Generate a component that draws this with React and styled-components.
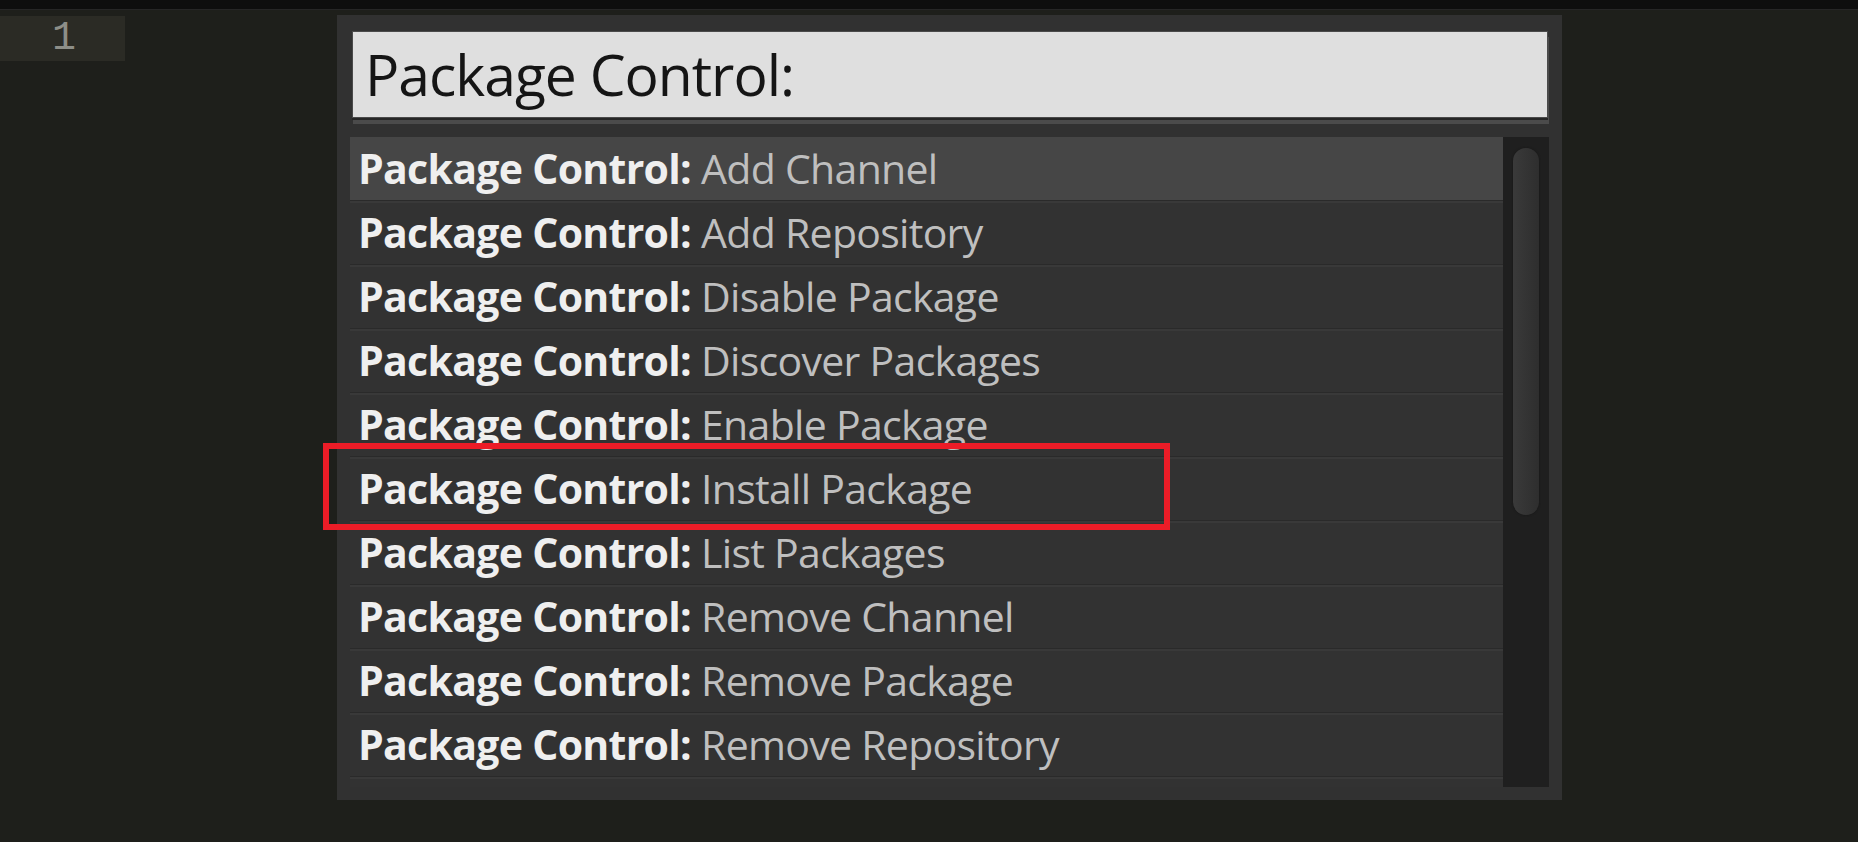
import React from "react";
import styled, { createGlobalStyle } from "styled-components";

const GlobalStyle = createGlobalStyle`
  html, body {
    margin: 0;
    padding: 0;
    background: #1e1f1b;
    overflow: hidden;
  }
`;

const Window = styled.div`
  position: relative;
  width: 1858px;
  height: 842px;
  background: #1e1f1b;
  font-family: "Open Sans", "Noto Sans", sans-serif;
  overflow: hidden;
`;

const TopBar = styled.div`
  height: 9px;
  background: #0e0e0e;
  border-bottom: 1px solid #262626;
`;

const Editor = styled.div`
  display: flex;
  padding-top: 6px;
`;

const Gutter = styled.div`
  width: 125px;
  display: flex;
  flex-direction: column;
`;

const LineNumber = styled.div`
  height: 45px;
  background: ${(p) => (p.$active ? "#2b2b25" : "transparent")};
  color: #8d8e88;
  font-family: "Liberation Mono", "DejaVu Sans Mono", monospace;
  font-size: 40px;
  line-height: 46px;
  padding-left: 52px;
`;

const Panel = styled.div`
  position: absolute;
  left: 337px;
  top: 15px;
  width: 1225px;
  height: 785px;
  box-sizing: border-box;
  background: #313131;
  padding: 16px 13px 13px 13px;
  display: flex;
  flex-direction: column;
`;

const Input = styled.div`
  margin: 0 1px 0 2px;
  height: 87px;
  flex: 0 0 87px;
  box-sizing: border-box;
  background: #dfdfdf;
  border: 1px solid #4a4a4a;
  box-shadow: 0 2px 0 #262626, 1px 6px 0 #4b4b4b;
  color: #151515;
  font-size: 57px;
  letter-spacing: -1px;
  line-height: 84px;
  padding-left: 12px;
  white-space: nowrap;
`;

const List = styled.div`
  margin-top: 19px;
  height: 650px;
  flex: 0 0 650px;
  display: flex;
  overflow: hidden;
`;

const Rows = styled.div`
  flex: 1;
  display: flex;
  flex-direction: column;
`;

const Row = styled.div`
  flex: 0 0 64px;
  box-sizing: border-box;
  background: ${(p) => (p.$selected ? "#464646" : "#323232")};
  border-top: 2px solid ${(p) => (p.$selected ? "#464646" : "#393939")};
  border-bottom: 1px solid #2a2a2a;
  padding-left: 8px;
  font-size: 41px;
  letter-spacing: -0.7px;
  line-height: 58px;
  white-space: nowrap;
  color: #bfbfbf;
`;

const Prefix = styled.span`
  font-weight: 700;
  color: #efefef;
`;

const Track = styled.div`
  width: 46px;
  background: #1f1f1f;
  padding: 11px 10px 0 10px;
  box-sizing: border-box;
`;

const Thumb = styled.div`
  width: 26px;
  height: 367px;
  border-radius: 13px;
  background: linear-gradient(to right, #3a3a3a, #2e2e2e);
  box-shadow: 0 0 2px #151515;
`;

const Highlight = styled.div`
  position: absolute;
  left: 323px;
  top: 443px;
  width: 847px;
  height: 87px;
  box-sizing: border-box;
  border: 6px solid #ec1c27;
  pointer-events: none;
`;

const commands = [
  "Add Channel",
  "Add Repository",
  "Disable Package",
  "Discover Packages",
  "Enable Package",
  "Install Package",
  "List Packages",
  "Remove Channel",
  "Remove Package",
  "Remove Repository",
];

export default function App() {
  return (
    <Window>
      <GlobalStyle />
      <TopBar />
      <Editor>
        <Gutter>
          <LineNumber $active>1</LineNumber>
        </Gutter>
      </Editor>
      <Panel>
        <Input>Package Control:</Input>
        <List>
          <Rows>
            {commands.map((c, i) => (
              <Row key={c} $selected={i === 0}>
                <Prefix>Package Control:</Prefix> {c}
              </Row>
            ))}
            {/* next entry, scrolled just out of view */}
            <Row aria-hidden />
          </Rows>
          <Track>
            <Thumb />
          </Track>
        </List>
      </Panel>
      <Highlight />
    </Window>
  );
}
